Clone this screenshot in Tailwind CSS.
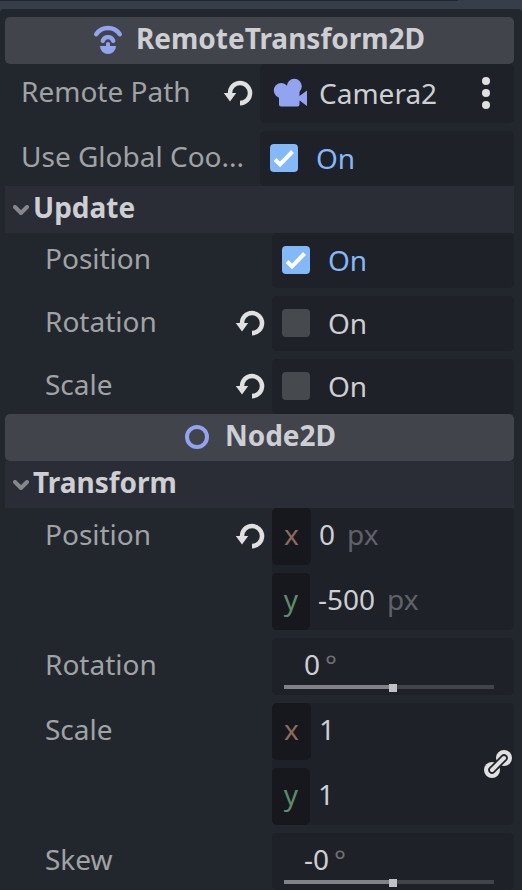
<!DOCTYPE html>
<html lang="en">

<head>
  <meta charset="UTF-8">
  <meta name="viewport" content="width=device-width, initial-scale=1.0">
  <title>Inspector</title>
  <script src="https://cdn.jsdelivr.net/npm/@tailwindcss/browser@4"></script>
</head>

<body class="bg-[#383d4a] overflow-hidden">
  <!-- Shared icons -->
  <svg class="hidden">
    <symbol id="reset" viewBox="0 0 16 16">
      <path fill="#e0e0e0" d="M9 1.900a6.100 6.100 0 0 0-6.100 6.100H.9l3.100 4.300L7.100 8H5.100a3.900 3.900 0 1 1 3.900 3.900v2.300A6.100 6.100 0 0 0 9 1.900z" />
    </symbol>
    <symbol id="chevron" viewBox="0 0 16 10">
      <path d="M2 2l6 6 6-6" fill="none" stroke="#85878b" stroke-width="4" stroke-linecap="round" stroke-linejoin="round" />
    </symbol>
    <symbol id="check" viewBox="0 0 28 28">
      <path d="M5 15.500l5 5L22.500 7.500" fill="none" stroke="#fff" stroke-width="4" />
    </symbol>
  </svg>

  <div class="h-[890px] w-[522px] flex flex-col text-[28px] leading-[38px] text-[#cdcfd2] whitespace-nowrap font-['Noto_Sans',sans-serif]">
    <div class="h-px w-[458px] shrink-0 bg-[#22272e]"></div>
    <div class="mt-2 h-[881px] bg-[#22272e] rounded-t-[4px] pt-2 pl-[5px] pr-2">

      <!-- RemoteTransform2D -->
      <div class="h-[47px] bg-[#42444c] rounded-[5px] flex justify-center gap-3 font-bold pt-0.5 pr-0.5">
        <svg class="size-8 mt-[5px]" viewBox="0 0 16 16">
          <g fill="none" stroke="#92a3ef" stroke-width="2.200" stroke-linecap="round">
            <path d="M2.100 5.100a7.200 7.200 0 0 1 11.800 0" />
            <path d="M5.400 8.400a2.750 2.750 0 0 1 5.200 0" />
          </g>
          <path fill="#92a3ef" d="M4 11h3v-1a1 1 0 0 1 2 0v1h3a4 4 0 0 1-8 0z" />
        </svg>
        <span>RemoteTransform2D</span>
      </div>
      <div class="flex h-[59px]">
        <div class="w-[255px] flex pl-4 pt-2 text-[#a0a3a5]">
          <span class="flex-1">Remote Path</span>
          <svg class="size-8 mt-[5px] mr-1.5"><use href="#reset" /></svg>
        </div>
        <div class="flex-1 bg-[#1e2128] rounded-[5px] flex pt-2.5 pl-3">
          <svg class="w-[36px] h-[32px] mt-[3px] mr-[11px]" viewBox="272 77 36 32" fill="#92a3ef">
            <circle cx="281.200" cy="90.500" r="7.400" />
            <circle cx="294.300" cy="86.300" r="7.500" />
            <path d="M279 88h20.500v8l7.500-5.500v15.500l-7.500-5.500v4a2 2 0 0 1-2 2H281a2 2 0 0 1-2-2z" />
          </svg>
          <span class="flex-1">Camera2</span>
          <svg class="w-2 h-8 mt-[3px] mr-6" viewBox="0 0 8 32" fill="#e0e0e0">
            <circle cx="4" cy="4" r="4" />
            <circle cx="4" cy="16" r="4" />
            <circle cx="4" cy="28" r="4" />
          </svg>
        </div>
      </div>
      <div class="flex h-[55px] mt-2">
        <div class="w-[255px] pl-4 pt-1.5 text-[#a0a3a5]">Use Global Coo...</div>
        <div class="flex-1 bg-[#1e2128] rounded-[5px] flex pt-2 pl-2.5 text-[#83b8f9]">
          <div class="size-7 mt-[5px] mr-[18px] rounded-[4px] bg-[#83b8f9]"><svg class="size-7"><use href="#check" /></svg></div>
          <span>On</span>
        </div>
      </div>

      <!-- Update -->
      <div class="h-[47px] bg-[#2a2d35] flex pl-2 pt-0.5 font-bold">
        <svg class="w-4 h-2.5 mt-[17px] mr-1"><use href="#chevron" /></svg>
        <span>Update</span>
      </div>
      <div class="flex h-[55px]">
        <div class="w-[267px] pl-10 pt-1.5 text-[#a0a3a5]">Position</div>
        <div class="flex-1 bg-[#1e2128] rounded-[5px] flex pt-2 pl-2.5 text-[#83b8f9]">
          <div class="size-7 mt-[5px] mr-[18px] rounded-[4px] bg-[#83b8f9]"><svg class="size-7"><use href="#check" /></svg></div>
          <span>On</span>
        </div>
      </div>
      <div class="flex h-[55px] mt-2">
        <div class="w-[267px] flex pl-10 pt-1.5 text-[#a0a3a5]">
          <span class="flex-1">Rotation</span>
          <svg class="size-8 mt-[5px] mr-1.5"><use href="#reset" /></svg>
        </div>
        <div class="flex-1 bg-[#1e2128] rounded-[5px] flex pt-2 pl-2.5">
          <div class="size-7 mt-[5px] mr-[18px] rounded-[4px] bg-[#46494d]"></div>
          <span>On</span>
        </div>
      </div>
      <div class="flex h-[55px] mt-2">
        <div class="w-[267px] flex pl-10 pt-1.5 text-[#a0a3a5]">
          <span class="flex-1">Scale</span>
          <svg class="size-8 mt-[5px] mr-1.5"><use href="#reset" /></svg>
        </div>
        <div class="flex-1 bg-[#1e2128] rounded-[5px] flex pt-2 pl-2.5">
          <div class="size-7 mt-[5px] mr-[18px] rounded-[4px] bg-[#46494d]"></div>
          <span>On</span>
        </div>
      </div>

      <!-- Node2D -->
      <div class="h-[47px] bg-[#42444c] rounded-[5px] flex justify-center gap-3 font-bold pt-0.5 pr-0.5">
        <svg class="size-8 mt-[5px]" viewBox="0 0 16 16">
          <circle cx="8" cy="8" r="5" fill="none" stroke="#92a3ef" stroke-width="2" />
        </svg>
        <span>Node2D</span>
      </div>

      <!-- Transform -->
      <div class="h-[47px] bg-[#2a2d35] flex pl-2 pt-0.5 font-bold">
        <svg class="w-4 h-2.5 mt-[17px] mr-1"><use href="#chevron" /></svg>
        <span>Transform</span>
      </div>
      <div class="flex h-[122px]">
        <div class="w-[267px] flex pl-10 pt-[7px] text-[#a0a3a5]">
          <span class="flex-1">Position</span>
          <svg class="size-8 mt-[5px] mr-1.5"><use href="#reset" /></svg>
        </div>
        <div class="flex-1 bg-[#1e2128] rounded-[5px] flex flex-col gap-2">
          <div class="flex h-[57px]">
            <div class="w-[39px] bg-[#17181d] rounded-[5px] text-center pt-[7px] text-[#8c6b5e]">x</div>
            <span class="pl-2 pt-[7px]">0</span>
            <span class="pl-3 pt-[7px] text-[#5f6267]">px</span>
          </div>
          <div class="flex h-[57px]">
            <div class="w-[38px] bg-[#17181d] rounded-[5px] text-center pt-[7px] text-[#5e8c6b]">y</div>
            <span class="pl-2 pt-[7px]">-500</span>
            <span class="pl-3 pt-[7px] text-[#5f6267]">px</span>
          </div>
        </div>
      </div>
      <div class="flex h-[57px] mt-2">
        <div class="w-[267px] pl-10 pt-[7px] text-[#a0a3a5]">Rotation</div>
        <div class="flex-1 bg-[#1e2128] rounded-[5px] pt-[7px]">
          <div class="flex gap-[5px] h-[39px] pl-8"><span>0</span><span class="text-[#6e7074]">°</span></div>
          <div class="flex items-start ml-3 w-[210px]">
            <div class="w-[105px] h-1 mt-px bg-[#808287]"></div>
            <div class="size-2 bg-[#c0c2c6]"></div>
            <div class="flex-1 h-1 mt-px bg-[#414449]"></div>
          </div>
        </div>
      </div>
      <div class="flex h-[122px] mt-2">
        <div class="w-[267px] pl-10 pt-[7px] text-[#a0a3a5]">Scale</div>
        <div class="flex-1 bg-[#1e2128] rounded-[5px] flex">
          <div class="flex-1 flex flex-col gap-2">
            <div class="flex h-[57px]">
              <div class="w-[39px] bg-[#17181d] rounded-[5px] text-center pt-[7px] text-[#8c6b5e]">x</div>
              <span class="pl-2 pt-[7px]">1</span>
            </div>
            <div class="flex h-[57px]">
              <div class="w-[38px] bg-[#17181d] rounded-[5px] text-center pt-[7px] text-[#5e8c6b]">y</div>
              <span class="pl-2 pt-[7px]">1</span>
            </div>
          </div>
          <svg class="size-7 mt-[47px] mr-0.5" viewBox="0 0 28 28">
            <circle cx="20" cy="8" r="8" fill="#e0e0e0" />
            <circle cx="8" cy="20" r="8" fill="#e0e0e0" />
            <path d="M8 20L20 8" stroke="#1e2128" stroke-width="7.500" stroke-linecap="round" />
            <path d="M8 20L20 8" stroke="#e0e0e0" stroke-width="4" stroke-linecap="round" />
          </svg>
        </div>
      </div>
      <div class="flex h-[57px] mt-2">
        <div class="w-[267px] pl-10 pt-[7px] text-[#a0a3a5]">Skew</div>
        <div class="flex-1 bg-[#1e2128] rounded-[5px] pt-[7px]">
          <div class="flex gap-[5px] h-[39px] pl-8"><span>-0</span><span class="text-[#6e7074]">°</span></div>
          <div class="flex items-start ml-3 w-[210px]">
            <div class="w-[105px] h-1 mt-px bg-[#808287]"></div>
            <div class="size-2 bg-[#c0c2c6]"></div>
            <div class="flex-1 h-1 mt-px bg-[#414449]"></div>
          </div>
        </div>
      </div>
    </div>
  </div>
</body>

</html>
